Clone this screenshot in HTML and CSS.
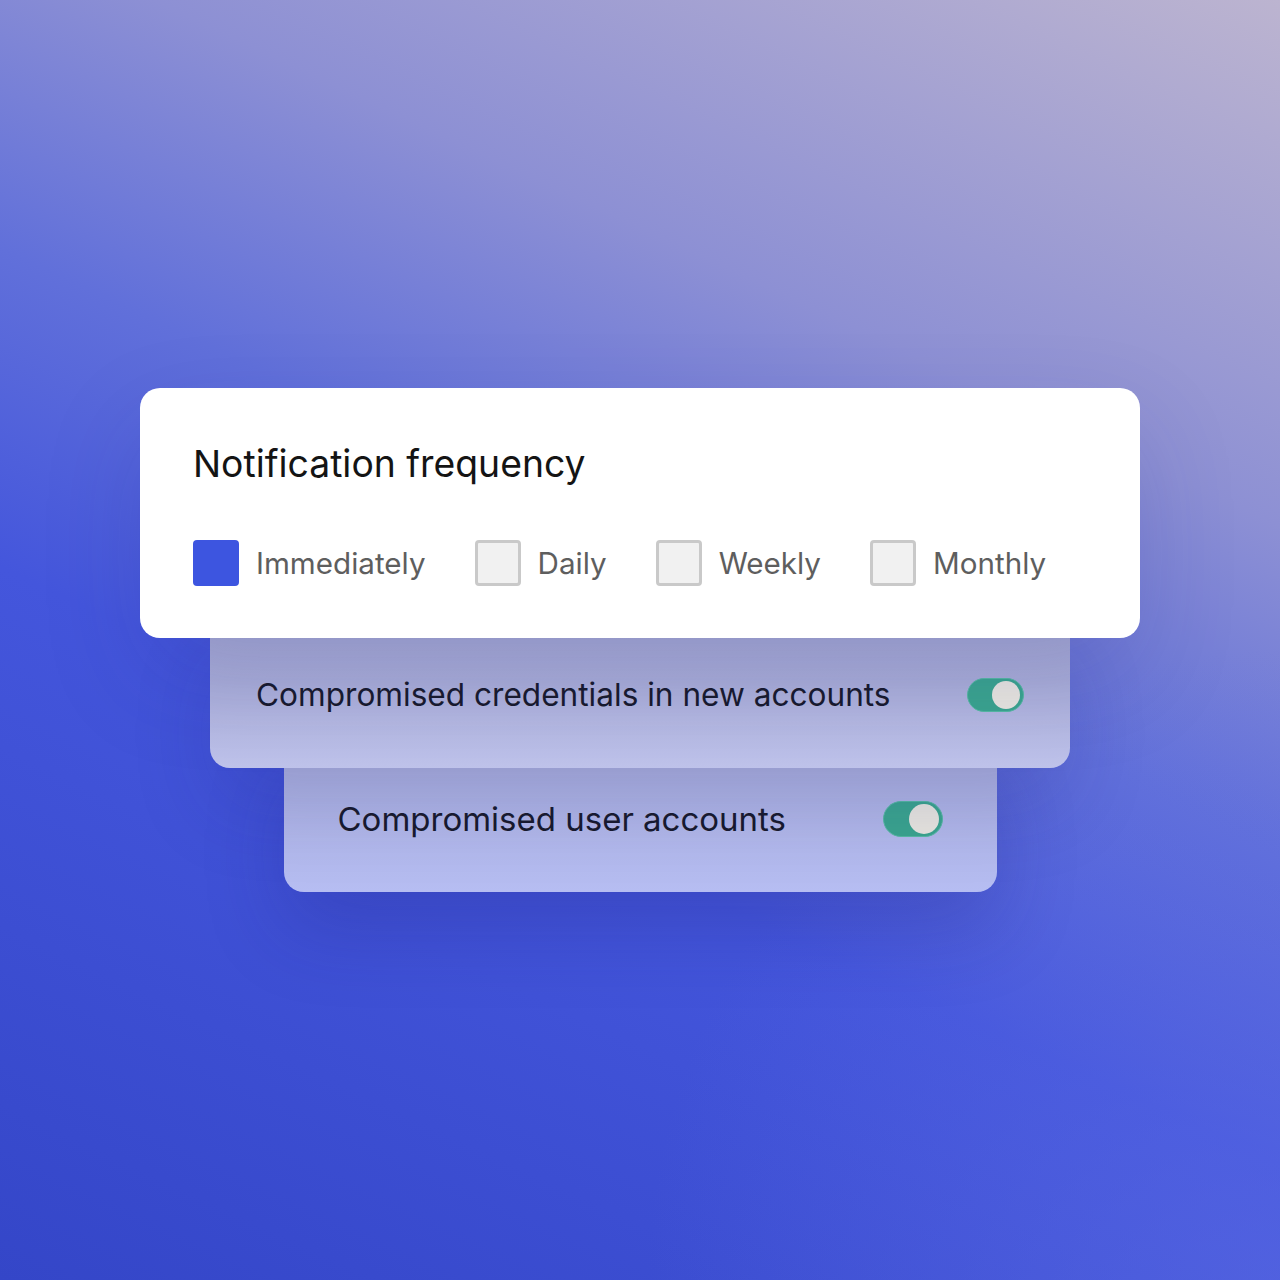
FILE: index.html
```
<!DOCTYPE html>
<html lang="en">
<head>
<meta charset="utf-8">
<title>Notification settings</title>
<link rel="stylesheet" href="styles.css">
</head>
<body>
<main class="stage">
  <section class="card card-main">
    <h1 class="title">Notification frequency</h1>
    <div class="options">
      <label class="option"><span class="box box-on"></span><span class="opt-label">Immediately</span></label>
      <label class="option"><span class="box"></span><span class="opt-label">Daily</span></label>
      <label class="option"><span class="box"></span><span class="opt-label">Weekly</span></label>
      <label class="option"><span class="box"></span><span class="opt-label">Monthly</span></label>
    </div>
  </section>
  <section class="card card-second">
    <span class="row-label">Compromised credentials in new accounts</span>
    <span class="toggle"><span class="knob"></span></span>
  </section>
  <section class="card card-third">
    <span class="row-label">Compromised user accounts</span>
    <span class="toggle toggle-lg"><span class="knob"></span></span>
  </section>
</main>
</body>
</html>
```
FILE: styles.css
```
html, body {
  margin: 0;
  padding: 0;
}
body {
  width: 1280px;
  height: 1280px;
  overflow: hidden;
  font-family: Inter, "Noto Sans", sans-serif;
  background:
    radial-gradient(circle at 100% 100%, rgba(95, 110, 230, 0.5) 0%, rgba(95, 110, 230, 0) 35%),
    linear-gradient(205deg, #bcb4d0 0%, #8d90d4 28%, #6170da 45%, #4456dc 62%, #3446c8 100%);
}
.stage {
  display: flex;
  flex-direction: column;
  align-items: center;
  padding-top: 388px;
}
.card {
  box-sizing: border-box;
  border-radius: 20px;
  position: relative;
}
.card-main {
  width: 1000px;
  height: 250px;
  background: #ffffff;
  padding: 54px 53px 0 53px;
  z-index: 3;
  box-shadow: 0 40px 100px rgba(40, 40, 130, 0.16);
}
.title {
  margin: 0;
  font-size: 37.3px;
  line-height: 44px;
  font-weight: 400;
  color: #141414;
}
.options {
  display: flex;
  align-items: center;
  gap: 49px;
  margin-top: 54px;
}
.option {
  display: flex;
  align-items: center;
  gap: 17px;
}
.box {
  box-sizing: border-box;
  width: 46px;
  height: 46px;
  border-radius: 4px;
  background: #f1f1f1;
  border: 3px solid #c9c9c9;
}
.box-on {
  background: #3d55e0;
  border: none;
}
.opt-label {
  font-size: 29.6px;
  line-height: 36px;
  color: #5e5e5e;
}
.card-second,
.card-third {
  display: flex;
  align-items: center;
  justify-content: space-between;
}
.card-second {
  width: 860px;
  height: 150px;
  margin-top: -20px;
  padding: 4px 46px 0 46px;
  z-index: 2;
  background: linear-gradient(180deg, #a4a8d2 0%, #a9add7 40%, #bfc3eb 100%);
  box-shadow: 0 40px 80px rgba(30, 30, 120, 0.16);
}
.card-third {
  width: 713px;
  height: 150px;
  margin-top: -26px;
  padding: 4px 54px 0 54px;
  z-index: 1;
  background: linear-gradient(180deg, #acb1dc 0%, #afb5e5 40%, #b6bdf2 100%);
  box-shadow: 0 36px 80px rgba(30, 30, 120, 0.24);
}
.row-label {
  font-size: 31.6px;
  line-height: 40px;
  color: #181a2c;
}
.card-third .row-label {
  font-size: 33px;
}
.toggle {
  box-sizing: border-box;
  width: 57px;
  height: 34px;
  border-radius: 17px;
  background: #3aa58e;
  border: 1.5px solid #55b9a2;
  display: flex;
  align-items: center;
  justify-content: flex-end;
  padding-right: 3px;
}
.toggle-lg {
  width: 60px;
  height: 36px;
  border-radius: 18px;
}
.knob {
  width: 28px;
  height: 28px;
  border-radius: 50%;
  background: #e8e6df;
}
.toggle-lg .knob {
  width: 30px;
  height: 30px;
}
```
